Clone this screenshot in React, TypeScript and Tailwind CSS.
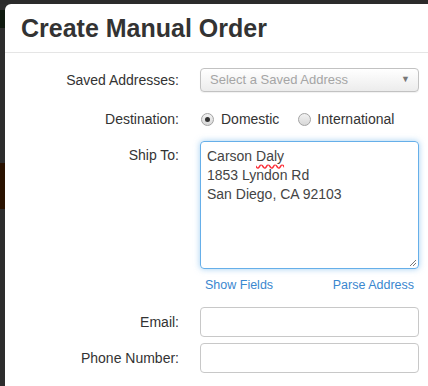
import React from "react";

// Create Manual Order modal (cropped view)

const font = { fontFamily: '"Liberation Sans", Arial, sans-serif' };

function Radio({ checked }: { checked?: boolean }) {
  return (
    <span className="flex h-[13px] w-[13px] items-center justify-center rounded-full border border-[#a3a3a3] bg-gradient-to-b from-[#f2f2f2] to-[#d8d8d8]">
      {checked && <span className="h-[5px] w-[5px] rounded-full bg-[#333]" />}
    </span>
  );
}

function Row({
  label,
  className,
  labelClass,
  children,
}: {
  label?: string;
  className?: string;
  labelClass?: string;
  children: React.ReactNode;
}) {
  return (
    <div className={"flex " + (className ?? "")}>
      <div className={"w-[174px] shrink-0 text-right text-[14px] text-[#333] " + (labelClass ?? "")}>
        {label}
      </div>
      <div className="ml-[21px] w-[219px] shrink-0">{children}</div>
    </div>
  );
}

export default function App() {
  return (
    <div className="flex h-[386px] w-[428px] flex-col overflow-hidden bg-[#2d2d2d]" style={font}>
      {/* backdrop top edge */}
      <div className="h-[4px] shrink-0 bg-[#2b2b2b]" />
      <div className="flex flex-1">
        {/* backdrop left edge */}
        <div className="flex w-[5px] shrink-0 flex-col">
          <div className="h-[6px] bg-[#2d2d2d]" />
          <div className="h-[18px] bg-[#0f1a0f]" />
          <div className="h-[135px] bg-[#2d2d2d]" />
          <div className="h-[46px] bg-[#2a1200]" />
          <div className="flex-1 bg-[#2d2d2d]" />
        </div>

        {/* modal */}
        <div className="flex-1 rounded-tl-[6px] bg-white">
          <div className="flex h-[49px] items-center border-b border-[#e5e5e5] px-4">
            <h3 className="text-[25px] font-bold leading-none text-[#333]">Create Manual Order</h3>
          </div>

          <Row label="Saved Addresses:" className="mt-[15px] h-[24px] items-center">
            <div className="flex h-[24px] items-center justify-between rounded-[4px] border border-[#c2c2c2] bg-gradient-to-b from-white to-[#ececec] pl-[9px] pr-[8px] shadow-[0_1px_1px_rgba(0,0,0,0.06)]">
              <span className="text-[13px] text-[#a5a5a5]">Select a Saved Address</span>
              <span className="text-[9px] text-[#777]">▼</span>
            </div>
          </Row>

          <Row label="Destination:" className="mt-[17px] h-[20px] items-center">
            <div className="flex items-center text-[14px] text-[#333]">
              <span className="ml-[1px]"><Radio checked /></span>
              <span className="ml-[7px]">Domestic</span>
              <span className="ml-[19px]"><Radio /></span>
              <span className="ml-[6px]">International</span>
            </div>
          </Row>

          <Row label="Ship To:" className="mt-[12px]" labelClass="pt-[4px] leading-[20px]">
            <div className="relative h-[128px] rounded-[4px] border border-[#66afe9] px-[6px] pt-[5px] text-[14px] leading-[19px] text-[#444] shadow-[0_0_6px_rgba(102,175,233,0.6)]">
              <div>
                Carson{" "}
                <span className="underline decoration-red-500 decoration-wavy underline-offset-[3px]">Daly</span>
              </div>
              <div>1853 Lyndon Rd</div>
              <div>San Diego, CA 92103</div>
              <svg className="absolute bottom-[1px] right-[1px]" width="9" height="9" viewBox="0 0 9 9">
                <path d="M8 2 L2 8 M8 5 L5 8" stroke="#777" strokeWidth="1" />
              </svg>
            </div>
          </Row>

          <Row className="mt-[8px] h-[16px] items-center">
            <div className="flex justify-between px-[5px] text-[12.5px] text-[#3a87cf]">
              <span>Show Fields</span>
              <span>Parse Address</span>
            </div>
          </Row>

          <Row label="Email:" className="mt-[14px] h-[30px] items-center">
            <div className="h-[30px] rounded-[4px] border border-[#c8c8c8] bg-white" />
          </Row>

          <Row label="Phone Number:" className="mt-[6px] h-[30px] items-center">
            <div className="h-[30px] rounded-[4px] border border-[#c8c8c8] bg-white" />
          </Row>
        </div>
      </div>
    </div>
  );
}
